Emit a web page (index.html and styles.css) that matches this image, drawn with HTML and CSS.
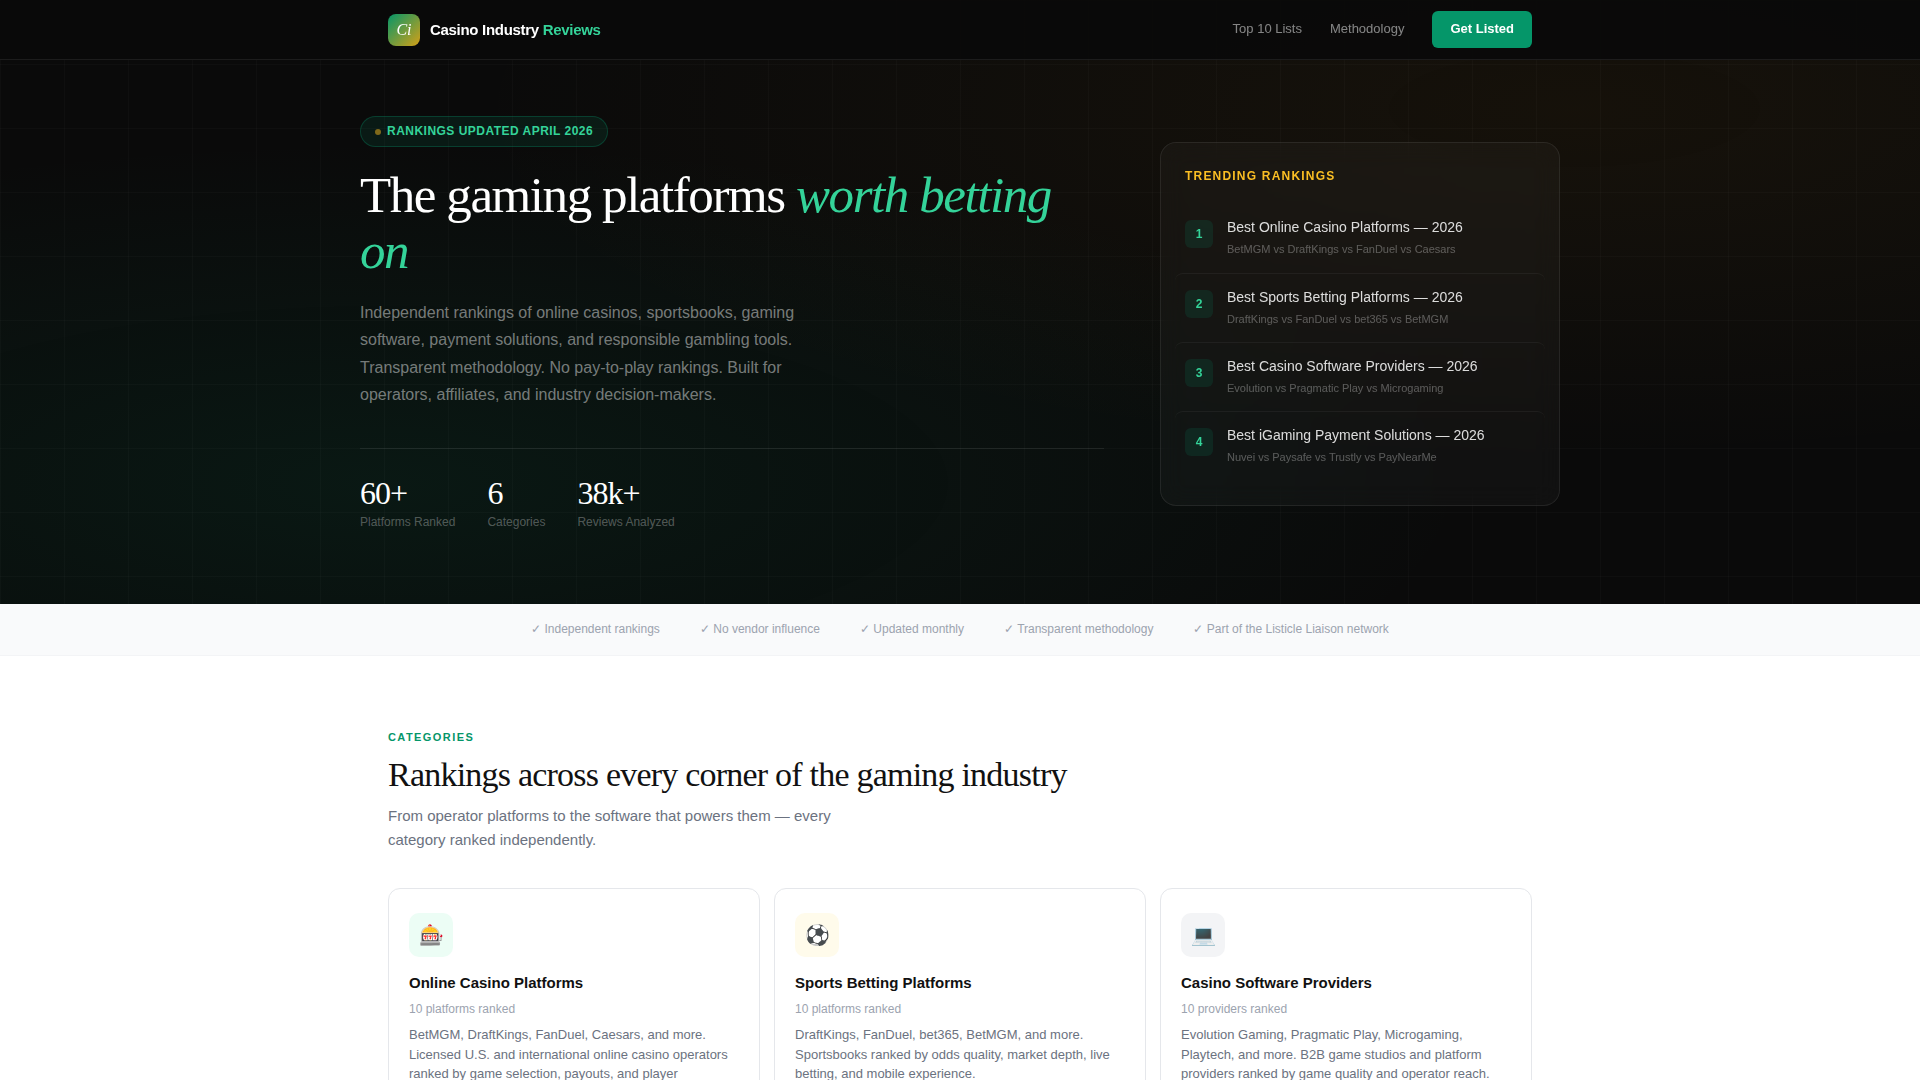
FILE: index.html
```html
<!DOCTYPE html>
<html lang="en">
<head>
<meta charset="UTF-8">
<meta name="viewport" content="width=device-width, initial-scale=1.0">
<title>Casino Industry Reviews</title>
<link rel="stylesheet" href="styles.css">
</head>
<body>

<!-- NAV -->
<header class="nav">
  <div class="nav-inner">
    <a href="#" class="logo">
      <span class="logo-mark">Ci</span>
      <span class="logo-text">Casino Industry <span>Reviews</span></span>
    </a>
    <nav class="nav-links">
      <a href="#categories">Top 10 Lists</a>
      <a href="#methodology">Methodology</a>
      <a href="#get-listed" class="nav-cta">Get Listed</a>
    </nav>
  </div>
</header>

<!-- HERO -->
<section class="hero">
  <div class="hero-inner">
    <div class="hero-copy">
      <div class="badge"><span class="badge-dot"></span>Rankings Updated April 2026</div>
      <h1>The gaming platforms <em>worth betting on</em></h1>
      <p class="hero-sub">Independent rankings of online casinos, sportsbooks, gaming software, payment solutions, and responsible gambling tools. Transparent methodology. No pay-to-play rankings. Built for operators, affiliates, and industry decision-makers.</p>
      <div class="stats">
        <div>
          <div class="stat-num">60+</div>
          <div class="stat-label">Platforms Ranked</div>
        </div>
        <div>
          <div class="stat-num">6</div>
          <div class="stat-label">Categories</div>
        </div>
        <div>
          <div class="stat-num">38k+</div>
          <div class="stat-label">Reviews Analyzed</div>
        </div>
      </div>
    </div>

    <div class="trending">
      <div class="trending-title">Trending Rankings</div>
      <a href="#" class="trend">
        <span class="trend-num">1</span>
        <span class="trend-body">
          <span class="trend-name">Best Online Casino Platforms — 2026</span>
          <span class="trend-vs">BetMGM vs DraftKings vs FanDuel vs Caesars</span>
        </span>
      </a>
      <a href="#" class="trend">
        <span class="trend-num">2</span>
        <span class="trend-body">
          <span class="trend-name">Best Sports Betting Platforms — 2026</span>
          <span class="trend-vs">DraftKings vs FanDuel vs bet365 vs BetMGM</span>
        </span>
      </a>
      <a href="#" class="trend">
        <span class="trend-num">3</span>
        <span class="trend-body">
          <span class="trend-name">Best Casino Software Providers — 2026</span>
          <span class="trend-vs">Evolution vs Pragmatic Play vs Microgaming</span>
        </span>
      </a>
      <a href="#" class="trend">
        <span class="trend-num">4</span>
        <span class="trend-body">
          <span class="trend-name">Best iGaming Payment Solutions — 2026</span>
          <span class="trend-vs">Nuvei vs Paysafe vs Trustly vs PayNearMe</span>
        </span>
      </a>
    </div>
  </div>
</section>

<!-- TRUST BAR -->
<div class="trust">
  <span>✓ Independent rankings</span>
  <span>✓ No vendor influence</span>
  <span>✓ Updated monthly</span>
  <span>✓ Transparent methodology</span>
  <span>✓ Part of the Listicle Liaison network</span>
</div>

<!-- CATEGORIES -->
<section class="section" id="categories">
  <div class="eyebrow">Categories</div>
  <h2>Rankings across every corner of the gaming industry</h2>
  <p class="section-sub">From operator platforms to the software that powers them — every category ranked independently.</p>

  <div class="cards">
    <a href="#" class="card">
      <div class="card-icon green">🎰</div>
      <h3>Online Casino Platforms</h3>
      <div class="card-count">10 platforms ranked</div>
      <p>BetMGM, DraftKings, FanDuel, Caesars, and more. Licensed U.S. and international online casino operators ranked by game selection, payouts, and player experience.</p>
    </a>
    <a href="#" class="card">
      <div class="card-icon amber">⚽</div>
      <h3>Sports Betting Platforms</h3>
      <div class="card-count">10 platforms ranked</div>
      <p>DraftKings, FanDuel, bet365, BetMGM, and more. Sportsbooks ranked by odds quality, market depth, live betting, and mobile experience.</p>
    </a>
    <a href="#" class="card">
      <div class="card-icon gray">💻</div>
      <h3>Casino Software Providers</h3>
      <div class="card-count">10 providers ranked</div>
      <p>Evolution Gaming, Pragmatic Play, Microgaming, Playtech, and more. B2B game studios and platform providers ranked by game quality and operator reach.</p>
    </a>
  </div>
</section>

</body>
</html>
```

FILE: styles.css
```css
* {
  margin: 0;
  padding: 0;
  box-sizing: border-box;
}

:root {
  --black: #0a0a0a;
  --emerald: #059669;
  --emerald-light: #34d399;
  --gold: #fbbf24;
  --serif: "Liberation Serif", "Times New Roman", serif;
  --sans: "Liberation Sans", Arial, sans-serif;
}

body {
  font-family: var(--sans);
  line-height: 1.6;
  color: #111;
  background: #fff;
}

a {
  color: inherit;
  text-decoration: none;
}

/* nav */
.nav {
  position: fixed;
  top: 0;
  left: 0;
  right: 0;
  z-index: 10;
  background: rgba(10, 10, 10, 0.95);
  border-bottom: 1px solid rgba(255, 255, 255, 0.08);
}

.nav-inner {
  max-width: 1200px;
  height: 59px;
  margin: 0 auto;
  padding: 0 28px;
  display: flex;
  align-items: center;
  justify-content: space-between;
}

.logo {
  display: flex;
  align-items: center;
  gap: 10px;
}

.logo-mark {
  width: 32px;
  height: 32px;
  border-radius: 8px;
  background: linear-gradient(135deg, #059669, #d4a017);
  color: #fff;
  font-family: var(--serif);
  font-style: italic;
  font-size: 16px;
  display: flex;
  align-items: center;
  justify-content: center;
}

.logo-text {
  font-size: 15px;
  font-weight: 700;
  letter-spacing: -0.02em;
  color: #fff;
}

.logo-text span {
  color: var(--emerald-light);
}

.nav-links {
  display: flex;
  align-items: center;
  gap: 28px;
  font-size: 13px;
  color: rgba(255, 255, 255, 0.5);
}

.nav-links .nav-cta {
  padding: 8px 18px;
  border-radius: 6px;
  background: var(--emerald);
  color: #fff;
  font-weight: 700;
}

/* hero */
.hero {
  padding: 116px 0 72px;
  background:
    linear-gradient(rgba(255, 255, 255, 0.02) 1px, transparent 1px) 0 0 / 64px 64px,
    linear-gradient(90deg, rgba(255, 255, 255, 0.02) 1px, transparent 1px) 0 0 / 64px 64px,
    radial-gradient(ellipse at 20% 80%, rgba(5, 150, 105, 0.1), transparent 50%),
    radial-gradient(ellipse at 82% 18%, rgba(217, 140, 16, 0.06), transparent 50%),
    var(--black);
}

.hero-inner {
  max-width: 1200px;
  margin: 0 auto;
  display: grid;
  grid-template-columns: 1fr 400px;
  gap: 56px;
  align-items: center;
}

.badge {
  display: inline-flex;
  align-items: center;
  gap: 6px;
  padding: 5px 14px;
  margin-bottom: 20px;
  border: 1px solid rgba(5, 150, 105, 0.3);
  border-radius: 100px;
  background: rgba(5, 150, 105, 0.12);
  color: var(--emerald-light);
  font-size: 12px;
  font-weight: 700;
  letter-spacing: 0.04em;
  text-transform: uppercase;
  vertical-align: top;
}

.badge-dot {
  width: 6px;
  height: 6px;
  border-radius: 50%;
  background: #f5b81f;
  opacity: 0.5;
}

h1 {
  font-family: var(--serif);
  font-size: 51px;
  font-weight: 400;
  line-height: 56px;
  letter-spacing: -0.028em;
  color: #fff;
  margin-bottom: 20px;
}

h1 em {
  color: var(--emerald-light);
}

.hero-sub {
  max-width: 460px;
  font-size: 16px;
  line-height: 1.7;
  color: rgba(255, 255, 255, 0.45);
  margin-bottom: 40px;
}

.stats {
  display: flex;
  gap: 32px;
  padding-top: 28px;
  border-top: 1px solid rgba(255, 255, 255, 0.08);
}

.stat-num {
  font-family: var(--serif);
  font-size: 32px;
  line-height: 1;
  letter-spacing: -0.03em;
  color: #fff;
  margin-bottom: 4px;
}

.stat-label {
  font-size: 12px;
  color: rgba(255, 255, 255, 0.3);
}

/* trending card */
.trending {
  padding: 24px 24px 25px;
  border: 1px solid rgba(255, 255, 255, 0.08);
  border-radius: 16px;
  background: rgba(255, 255, 255, 0.03);
  backdrop-filter: blur(12px);
}

.trending-title {
  font-size: 12px;
  font-weight: 700;
  letter-spacing: 0.1em;
  text-transform: uppercase;
  color: var(--gold);
  margin-bottom: 18px;
}

.trend {
  display: flex;
  gap: 14px;
  min-height: 69px;
  margin: 0 -10px;
  padding: 14px 10px;
  border-radius: 8px;
}

.trend + .trend {
  border-top: 1px solid rgba(255, 255, 255, 0.05);
}

.trend-num {
  flex: none;
  width: 28px;
  height: 28px;
  margin-top: 2px;
  border-radius: 6px;
  background: rgba(5, 150, 105, 0.15);
  color: var(--emerald-light);
  font-size: 12px;
  font-weight: 700;
  display: flex;
  align-items: center;
  justify-content: center;
}

.trend-body {
  display: flex;
  flex-direction: column;
  gap: 4px;
}

.trend-name {
  font-size: 14px;
  line-height: 18px;
  color: rgba(255, 255, 255, 0.85);
}

.trend-vs {
  font-size: 11px;
  line-height: 18px;
  color: rgba(255, 255, 255, 0.3);
}

/* trust bar */
.trust {
  display: flex;
  justify-content: center;
  gap: 40px;
  padding: 16px 28px;
  background: #f9fafb;
  border-bottom: 1px solid #f3f4f6;
  font-size: 12px;
  color: #9ca3af;
}

/* categories */
.section {
  max-width: 1200px;
  margin: 0 auto;
  padding: 72px 28px;
}

.eyebrow {
  font-size: 11px;
  font-weight: 700;
  line-height: 19px;
  letter-spacing: 0.13em;
  text-transform: uppercase;
  color: var(--emerald);
  margin-bottom: 8px;
}

h2 {
  font-family: var(--serif);
  font-size: 34px;
  font-weight: 400;
  line-height: 39px;
  letter-spacing: -0.023em;
  margin-bottom: 10px;
}

.section-sub {
  max-width: 480px;
  font-size: 15px;
  color: #6b7280;
  margin-bottom: 36px;
}

.cards {
  display: grid;
  grid-template-columns: repeat(3, 1fr);
  gap: 14px;
}

.card {
  padding: 24px 20px;
  border: 1px solid #e5e7eb;
  border-radius: 12px;
}

.card-icon {
  width: 44px;
  height: 44px;
  margin-bottom: 14px;
  border-radius: 10px;
  font-size: 20px;
  display: flex;
  align-items: center;
  justify-content: center;
}

.card-icon.green {
  background: #ecfdf5;
}

.card-icon.amber {
  background: #fffbeb;
}

.card-icon.gray {
  background: #f3f4f6;
}

.card h3 {
  font-size: 15px;
  font-weight: 700;
  margin-bottom: 4px;
}

.card-count {
  font-size: 12px;
  line-height: 20px;
  color: #9ca3af;
  margin-bottom: 6px;
}

.card p {
  font-size: 13px;
  line-height: 1.5;
  color: #6b7280;
}
```
